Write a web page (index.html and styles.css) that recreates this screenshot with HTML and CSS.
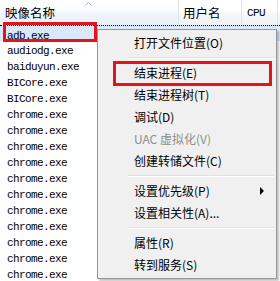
FILE: index.html
```html
<!DOCTYPE html>
<html>
<head>
<meta charset="utf-8">
<link rel="stylesheet" href="styles.css">
</head>
<body>
<div class="view">
  <div class="header">
    <div class="hcol c1 sorted">
      <span class="htext">映像名称</span>
      <svg class="sort" width="7" height="4" viewBox="0 0 7 4"><polyline points="0.5,3.5 3.5,0.5 6.5,3.5" fill="none" stroke="#9db2c8" stroke-width="1"/></svg>
    </div>
    <div class="hcol c2"><span class="htext">用户名</span></div>
    <div class="hcol c3"><span class="mono">CPU</span></div>
  </div>
  <div class="rows">
    <div class="row selected"><span class="mono">adb.exe</span></div>
    <div class="row"><span class="mono">audiodg.exe</span></div>
    <div class="row"><span class="mono">baiduyun.exe</span></div>
    <div class="row"><span class="mono">BICore.exe</span></div>
    <div class="row"><span class="mono">BICore.exe</span></div>
    <div class="row"><span class="mono">chrome.exe</span></div>
    <div class="row"><span class="mono">chrome.exe</span></div>
    <div class="row"><span class="mono">chrome.exe</span></div>
    <div class="row"><span class="mono">chrome.exe</span></div>
    <div class="row"><span class="mono">chrome.exe</span></div>
    <div class="row"><span class="mono">chrome.exe</span></div>
    <div class="row"><span class="mono">chrome.exe</span></div>
    <div class="row"><span class="mono">chrome.exe</span></div>
    <div class="row"><span class="mono">chrome.exe</span></div>
    <div class="row"><span class="mono">chrome.exe</span></div>
    <div class="row"><span class="mono">chrome.exe</span></div>
  </div>

  <div class="menu">
    <div class="item">打开文件位置(O)</div>
    <div class="sep"></div>
    <div class="item">结束进程(E)</div>
    <div class="item">结束进程树(T)</div>
    <div class="item">调试(D)</div>
    <div class="item disabled">UAC 虚拟化(V)</div>
    <div class="item">创建转储文件(C)</div>
    <div class="sep"></div>
    <div class="item sub">设置优先级(P)<span class="arrow"></span></div>
    <div class="item">设置相关性(A)...</div>
    <div class="sep"></div>
    <div class="item">属性(R)</div>
    <div class="item">转到服务(S)</div>
  </div>

  <div class="mark mark-row"></div>
  <div class="mark mark-item"></div>
</div>
</body>
</html>
```

FILE: styles.css
```css
html, body {
  margin: 0;
  padding: 0;
  background: #ffffff;
}
.view {
  position: relative;
  width: 280px;
  height: 281px;
  overflow: hidden;
  font-family: "Noto Sans CJK SC", "Noto Sans", sans-serif;
  font-size: 12px;
  color: #000;
}
.mono {
  font-family: "Liberation Mono", "Noto Sans CJK SC", monospace;
  font-size: 11px;
  letter-spacing: -0.6px;
}
.header {
  display: flex;
  height: 25px;
  background: linear-gradient(#ffffff 0%, #ffffff 40%, #f3f6fa 60%, #eef2f6 100%);
}
.hcol {
  position: relative;
  display: flex;
  align-items: center;
  height: 25px;
  box-sizing: border-box;
  border-right: 1px solid #dfe3e8;
}
.hcol.sorted {
  background: linear-gradient(#ffffff 0%, #fbfdfe 40%, #eef4fa 60%, #e8eff7 100%);
}
.c1 { width: 179px; padding-left: 5px; }
.c2 { width: 63px; padding-left: 4px; }
.c3 { width: 36px; padding-left: 5px; }
.htext { line-height: 16px; font-size: 12.5px; }
.sort {
  position: absolute;
  left: 85px;
  top: 2px;
}
.rows {
  display: flex;
  flex-direction: column;
}
.row {
  height: 16px;
  line-height: 16px;
  padding-left: 7px;
  box-sizing: border-box;
  white-space: nowrap;
}
.row.selected {
  background: #d9e8fb;
  border-top: 1px dotted #000;
  line-height: 15px;
}
.menu {
  position: absolute;
  left: 97px;
  top: 29px;
  width: 180px;
  box-sizing: border-box;
  border: 1px solid #979797;
  background: #f0f0f0;
  padding: 2px;
  box-shadow: 2px 2px 2px rgba(0,0,0,0.25);
}
.item {
  position: relative;
  height: 22px;
  line-height: 22px;
  padding-left: 34px;
  white-space: nowrap;
}
.item.disabled { color: #8d8d8d; }
.arrow {
  position: absolute;
  right: 10px;
  top: 7px;
  width: 0;
  height: 0;
  border-top: 4px solid transparent;
  border-bottom: 4px solid transparent;
  border-left: 4px solid #000;
}
.sep {
  position: relative;
  height: 8px;
  margin-left: 28px;
}
.sep::before {
  content: "";
  position: absolute;
  left: 0;
  right: 0;
  top: 3px;
  height: 1px;
  background: #e0e0e0;
}
.sep::after {
  content: "";
  position: absolute;
  left: 0;
  right: 0;
  top: 4px;
  height: 1px;
  background: #ffffff;
}
.mark {
  position: absolute;
  border: 3px solid #e3141b;
  box-sizing: border-box;
}
.mark-row { left: 3px; top: 22px; width: 94px; height: 20px; }
.mark-item { left: 113px; top: 61px; width: 159px; height: 25px; }
```
